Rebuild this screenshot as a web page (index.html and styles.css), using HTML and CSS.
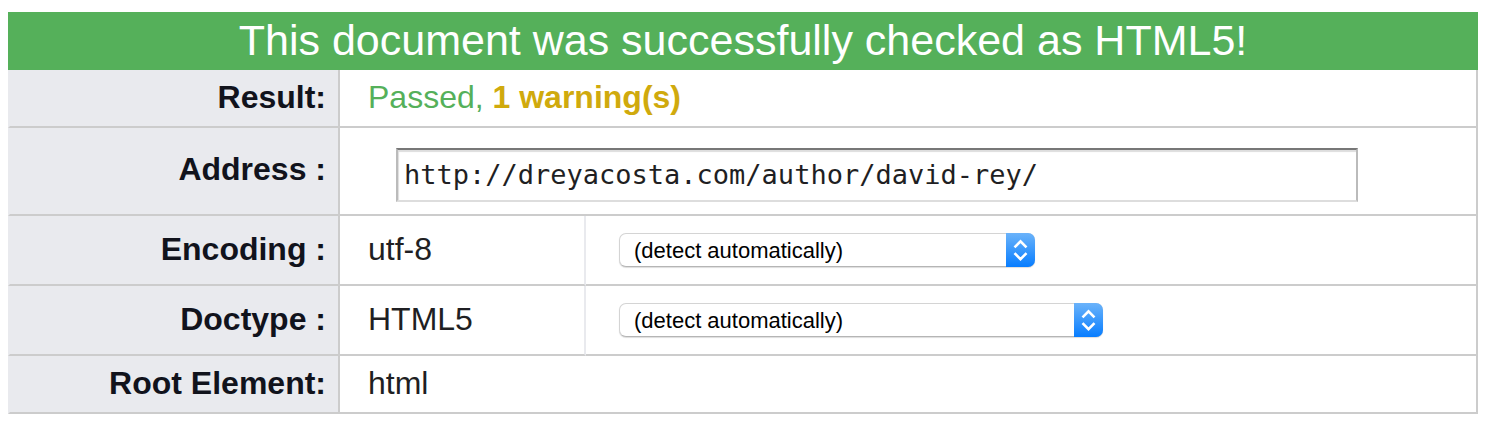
FILE: index.html
```html
<!DOCTYPE html>
<html lang="en">
<head>
<meta charset="utf-8">
<title>Markup validation result</title>
<link rel="stylesheet" href="styles.css">
</head>
<body>
<form class="report">
  <table class="results">
    <colgroup>
      <col class="col-label">
      <col class="col-value">
      <col>
    </colgroup>
    <thead>
      <tr><th class="banner" colspan="3" scope="colgroup">This document was successfully checked as HTML5!</th></tr>
    </thead>
    <tbody>
      <tr>
        <th class="label" scope="row">Result:</th>
        <td class="value valid" colspan="2">Passed, <strong class="warnings">1 warning(s)</strong></td>
      </tr>
      <tr class="row-address">
        <th class="label" scope="row"><label for="uri">Address :</label></th>
        <td class="value address" colspan="2"><input class="uri" id="uri" type="text" value="http://dreyacosta.com/author/david-rey/"></td>
      </tr>
      <tr class="row-option">
        <th class="label" scope="row"><label for="charset">Encoding :</label></th>
        <td class="value detected">utf-8</td>
        <td class="option">
          <div class="picker picker-charset">
            <select class="select" id="charset"><option>(detect automatically)</option></select>
            <span class="stepper"><svg width="15" height="22" viewBox="0 0 15 22" fill="none" stroke="#fff" stroke-width="2.6"><path d="M1.5 8.3L7.5 2.3L13.5 8.3M1.5 14.2L7.5 20.2L13.5 14.2"/></svg></span>
          </div>
        </td>
      </tr>
      <tr class="row-option">
        <th class="label" scope="row"><label for="doctype">Doctype :</label></th>
        <td class="value detected">HTML5</td>
        <td class="option">
          <div class="picker picker-doctype">
            <select class="select" id="doctype"><option>(detect automatically)</option></select>
            <span class="stepper"><svg width="15" height="22" viewBox="0 0 15 22" fill="none" stroke="#fff" stroke-width="2.6"><path d="M1.5 8.3L7.5 2.3L13.5 8.3M1.5 14.2L7.5 20.2L13.5 14.2"/></svg></span>
          </div>
        </td>
      </tr>
      <tr>
        <th class="label" scope="row">Root Element:</th>
        <td class="value" colspan="2">html</td>
      </tr>
    </tbody>
  </table>
</form>
</body>
</html>
```
FILE: styles.css
```css
* {
  box-sizing: border-box;
}

body {
  margin: 0;
  background: #fff;
  color: #1f1f23;
  font-family: "Liberation Sans", Arial, sans-serif;
  font-size: 32px;
  line-height: 36px;
}

.report {
  padding: 12px 10px 10px 8px;
}

.results {
  width: 100%;
  table-layout: fixed;
  border-collapse: separate;
  border-spacing: 0;
}

.col-label {
  width: 332px;
}

.col-value {
  width: 246px;
}

.banner {
  padding: 4px 0 6px;
  background: #55b05a;
  color: #fff;
  font-size: 43px;
  font-weight: 400;
  line-height: 48px;
  text-align: center;
}

.label {
  padding: 9px 12px 11px 0;
  border: solid #ccc;
  border-width: 0 2px 2px;
  border-left-color: #e9eaee;
  background: #e9eaee;
  color: #11131c;
  font-weight: 700;
  text-align: right;
  vertical-align: top;
}

.value {
  padding: 9px 0 11px 28px;
  border: solid #ccc;
  border-width: 0 2px 2px 0;
  vertical-align: top;
}

.valid {
  color: #55b05a;
}

.warnings {
  color: #d0aa0d;
}

.row-address .label {
  padding-top: 23px;
}

.value.address {
  padding: 20px 118px 12px 56px;
}

.uri {
  display: block;
  width: 100%;
  height: 54px;
  margin: 0;
  padding: 0 6px 2px;
  border: 2px solid;
  border-color: #777 #bbb #ddd #bbb;
  border-radius: 0;
  background: #fff;
  box-shadow: inset 0 3px 1px -1px #ddd, inset 3px 0 1px -2px #ddd;
  color: #1f1f23;
  font-family: "DejaVu Sans Mono", monospace;
  font-size: 27px;
}

.row-option .label,
.row-option .value {
  padding: 15px 12px 17px 28px;
}

.row-option .detected {
  border-right-color: #e9eaee;
}

.option {
  padding: 0 33px;
  border: solid #ccc;
  border-width: 0 2px 2px 0;
  vertical-align: middle;
}

.picker {
  position: relative;
  max-width: 100%;
  height: 34px;
}

.picker-charset {
  width: 416px;
}

.picker-doctype {
  width: 484px;
}

.select {
  display: block;
  width: 100%;
  height: 34px;
  margin: 0;
  padding: 0 40px 0 14px;
  appearance: none;
  border: 1px solid #d4d4d4;
  border-bottom-color: #b5b5b5;
  border-radius: 7px;
  background: #fff;
  box-shadow: 0 1px 1px #ddd;
  color: #000;
  font-family: "Liberation Sans", Arial, sans-serif;
  font-size: 22px;
}

.stepper {
  position: absolute;
  top: 0;
  right: 0;
  bottom: 0;
  display: flex;
  align-items: center;
  justify-content: center;
  width: 29px;
  border-radius: 0 7px 7px 0;
  background: linear-gradient(#6bb3fa, #077dff);
  pointer-events: none;
}
```
